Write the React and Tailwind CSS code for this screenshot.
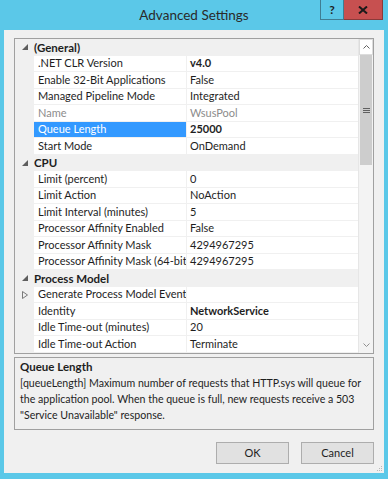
import React from "react";

const FONT = { fontFamily: 'Lato, "Noto Sans", sans-serif' };

const sections = [
  {
    title: "(General)",
    rows: [
      { name: ".NET CLR Version", value: "v4.0", bold: true },
      { name: "Enable 32-Bit Applications", value: "False" },
      { name: "Managed Pipeline Mode", value: "Integrated" },
      { name: "Name", value: "WsusPool", muted: true },
      { name: "Queue Length", value: "25000", bold: true, selected: true },
      { name: "Start Mode", value: "OnDemand" },
    ],
  },
  {
    title: "CPU",
    rows: [
      { name: "Limit (percent)", value: "0" },
      { name: "Limit Action", value: "NoAction" },
      { name: "Limit Interval (minutes)", value: "5" },
      { name: "Processor Affinity Enabled", value: "False" },
      { name: "Processor Affinity Mask", value: "4294967295" },
      { name: "Processor Affinity Mask (64-bit option)", value: "4294967295" },
    ],
  },
  {
    title: "Process Model",
    rows: [
      { name: "Generate Process Model Event Log Entry", value: "", collapsed: true },
      { name: "Identity", value: "NetworkService", bold: true },
      { name: "Idle Time-out (minutes)", value: "20" },
      { name: "Idle Time-out Action", value: "Terminate" },
    ],
  },
];

function Expanded() {
  return (
    <svg width="6" height="6" viewBox="0 0 6 6">
      <polygon points="6,0 6,6 0,6" fill="#5e5e5e" />
    </svg>
  );
}

function Collapsed() {
  return (
    <svg width="6" height="8" viewBox="0 0 6 8">
      <polygon points="0.5,0.5 5.5,4 0.5,7.5" fill="none" stroke="#7a7a7a" strokeWidth="1" />
    </svg>
  );
}

function CategoryRow({ title }) {
  return (
    <div className="h-[16.53px] flex items-center bg-[#f0f0f0] shrink-0">
      <div className="w-[19px] flex justify-center pl-[1px]">
        <Expanded />
      </div>
      <span className="font-bold text-[11.5px] text-[#1e1e1e] leading-none">{title}</span>
    </div>
  );
}

function PropRow({ row }) {
  return (
    <div className="h-[16.53px] flex shrink-0 bg-[#f0f0f0]">
      <div className="w-[19px] flex items-center justify-center pl-[1px]">
        {row.collapsed && <Collapsed />}
      </div>
      <div
        className={
          "w-[152px] flex items-center pl-[4px] overflow-hidden whitespace-nowrap text-[11px] border-b border-[#f0f0f0] " +
          (row.selected
            ? "bg-[#3399ff] text-white"
            : row.muted
            ? "bg-white text-[#8c8c8c]"
            : "bg-white text-[#1e1e1e]")
        }
      >
        {row.name}
      </div>
      <div
        className={
          "flex-1 flex items-center pl-[3px] ml-[1px] overflow-hidden whitespace-nowrap text-[11px] bg-white border-b border-[#f0f0f0] " +
          (row.bold ? "font-bold " : "") +
          (row.muted ? "text-[#8c8c8c]" : "text-[#1e1e1e]")
        }
      >
        {row.value}
      </div>
    </div>
  );
}

function ScrollBar() {
  return (
    <div className="w-[15px] flex flex-col bg-[#f3f3f3] border-l border-[#e6e6e6]">
      <div className="h-[16px] bg-white border border-[#dcdcdc] flex items-center justify-center">
        <svg width="7" height="4" viewBox="0 0 7 4">
          <polyline points="0.5,3.5 3.5,0.5 6.5,3.5" fill="none" stroke="#606060" strokeWidth="1" />
        </svg>
      </div>
      <div className="h-[110px] bg-[#cdcdcd] flex items-center justify-center mx-[1px]">
        <svg width="7" height="5" viewBox="0 0 7 5">
          <rect x="0" y="0" width="7" height="1" fill="#606060" />
          <rect x="0" y="2" width="7" height="1" fill="#606060" />
          <rect x="0" y="4" width="7" height="1" fill="#606060" />
        </svg>
      </div>
      <div className="flex-1" />
      <div className="h-[16px] flex items-center justify-center">
        <svg width="7" height="4" viewBox="0 0 7 4">
          <polyline points="0.5,0.5 3.5,3.5 6.5,0.5" fill="none" stroke="#909090" strokeWidth="1" />
        </svg>
      </div>
    </div>
  );
}

export default function App() {
  return (
    <div className="w-[388px] h-[479px] bg-[#5bc8e8] flex flex-col" style={FONT}>
      {/* Title bar */}
      <div className="h-[30px] relative flex items-center justify-center shrink-0">
        <span className="text-[13.5px] text-[#2a2a2a] pt-[1px]">Advanced Settings</span>
        <div className="absolute top-0 right-[5px] flex">
          <div className="w-[24px] h-[20px] border border-[#3f7d92] border-t-0 flex items-center justify-center text-[12px] font-bold text-[#1e1e1e]">
            ?
          </div>
          <div className="w-[39px] h-[20px] bg-[#c75050] border border-[#8a3a3a] border-t-0 border-l-0 flex items-center justify-center">
            <svg width="10" height="8" viewBox="0 0 10 8">
              <path d="M1 0.5 L9 7.5 M9 0.5 L1 7.5" stroke="#1a1a1a" strokeWidth="2" />
            </svg>
          </div>
        </div>
      </div>

      {/* Client area */}
      <div className="flex-1 mx-[4px] mb-[6px] bg-[#f0f0f0] flex flex-col px-[10px] pt-[8px] relative">
        {/* Property grid */}
        <div className="h-[316px] border border-[#a0a0a0] flex bg-white shrink-0">
          <div className="flex-1 flex flex-col overflow-hidden">
            {sections.map((s) => (
              <React.Fragment key={s.title}>
                <CategoryRow title={s.title} />
                {s.rows.map((r) => (
                  <PropRow key={r.name} row={r} />
                ))}
              </React.Fragment>
            ))}
          </div>
          <ScrollBar />
        </div>

        {/* Description */}
        <div className="mt-[3px] h-[73px] border border-[#a0a0a0] bg-[#f0f0f0] px-[5px] pt-[1px] shrink-0">
          <div className="text-[11.5px] font-bold text-[#1e1e1e] leading-[16px]">Queue Length</div>
          <p className="text-[10.6px] text-[#1e1e1e] leading-[16px] whitespace-nowrap">
            [queueLength] Maximum number of requests that HTTP.sys will queue for
            <br />
            the application pool. When the queue is full, new requests receive a 503
            <br />
            "Service Unavailable" response.
          </p>
        </div>

        {/* Buttons */}
        <div className="mt-[12px] flex justify-end gap-[12px]">
          <button className="w-[73px] h-[22px] bg-[#e1e1e1] border border-[#adadad] text-[11px] text-[#1e1e1e]">
            OK
          </button>
          <button className="w-[73px] h-[22px] bg-[#e1e1e1] border border-[#adadad] text-[11px] text-[#1e1e1e]">
            Cancel
          </button>
        </div>

        {/* Resize grip */}
        <div className="absolute right-[1px] bottom-[1px]">
          <svg width="8" height="8" viewBox="0 0 8 8">
            <rect x="6" y="2" width="1" height="1" fill="#b8b8b8" />
            <rect x="4" y="4" width="1" height="1" fill="#b8b8b8" />
            <rect x="6" y="4" width="1" height="1" fill="#b8b8b8" />
            <rect x="2" y="6" width="1" height="1" fill="#b8b8b8" />
            <rect x="4" y="6" width="1" height="1" fill="#b8b8b8" />
            <rect x="6" y="6" width="1" height="1" fill="#b8b8b8" />
          </svg>
        </div>
      </div>
    </div>
  );
}
